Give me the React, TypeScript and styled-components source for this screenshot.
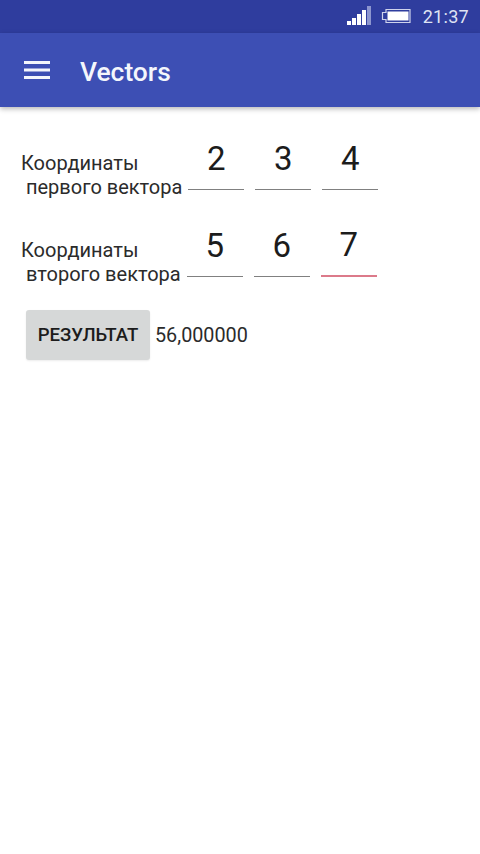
import React from "react";
import styled, { createGlobalStyle } from "styled-components";

const Global = createGlobalStyle`
  html, body { margin: 0; padding: 0; background: #fff; }
  body { font-family: Roboto, "Noto Sans", sans-serif; }
`;

const Screen = styled.div`
  width: 480px;
  height: 854px;
  display: flex;
  flex-direction: column;
  background: #fff;
  overflow: hidden;
`;

const StatusBar = styled.div`
  height: 33px;
  flex: none;
  display: flex;
  align-items: center;
  justify-content: flex-end;
  padding-right: 11px;
  background: #2f3d9e;
  color: #dfe3f3;
`;

const SignalIcon = styled.svg`
  width: 26px;
  height: 20px;
  margin-right: 9px;
  margin-top: -1px;
`;

const BatteryIcon = styled.svg`
  width: 31px;
  height: 16px;
  margin-right: 11px;
  margin-top: -2px;
`;

const Clock = styled.span`
  font-size: 18px;
  line-height: 33px;
  letter-spacing: 0.3px;
`;

const Toolbar = styled.header`
  height: 74px;
  flex: none;
  display: flex;
  align-items: center;
  background: #3d4fb4;
  box-shadow: 0 2px 5px rgba(0, 0, 0, 0.28);
  color: #f4f6fc;
  position: relative;
`;

const MenuIcon = styled.svg`
  width: 26px;
  height: 18px;
  margin: 0 30px 0 24px;
  margin-top: -1px;
`;

const Title = styled.h1`
  margin: 3px 0 0;
  font-size: 26.4px;
  font-weight: 500;
  line-height: 74px;
`;

const Content = styled.main`
  display: flex;
  flex-direction: column;
  padding: 35px 0 0 21px;
`;

const VectorRow = styled.section`
  display: flex;
  align-items: flex-end;
  height: 48px;
  margin-bottom: 39px;
`;

const Label = styled.div`
  font-size: 20px;
  line-height: 24px;
  color: #2b2b2b;
  white-space: pre;
  margin-bottom: -9px;
`;

const Fields = styled.div`
  display: flex;
  gap: 11px;
  margin-left: 6px;
`;

const Coord = styled.input<{ $error?: boolean }>`
  width: 56px;
  height: 50px;
  box-sizing: border-box;
  padding: 0 0 13px;
  border: 0;
  border-bottom: ${(p) => (p.$error ? "2px solid #dc7a8a" : "1px solid #808080")};
  background: transparent;
  outline: none;
  text-align: center;
  font-family: inherit;
  font-size: 33px;
  line-height: 36px;
  color: #1c1c1c;
`;

const ResultRow = styled.section`
  display: flex;
  align-items: center;
  margin: -6px 0 0 5px;
`;

const ResultButton = styled.button`
  width: 124px;
  height: 50px;
  padding: 0;
  border: 0;
  border-radius: 3px;
  background: #d6d8d8;
  box-shadow: 0 1px 2px rgba(0, 0, 0, 0.08);
  font-family: inherit;
  font-size: 18.6px;
  font-weight: 500;
  color: #1c1c1c;
`;

const ResultValue = styled.span`
  margin-left: 5px;
  font-size: 19.8px;
  color: #2b2b2b;
`;

const rows = [
  { label: "Координаты\n первого вектора", values: ["2", "3", "4"], errorAt: -1 },
  { label: "Координаты\n второго вектора", values: ["5", "6", "7"], errorAt: 2 },
];

export default function App() {
  return (
    <Screen>
      <Global />
      <StatusBar>
        <SignalIcon viewBox="0 0 26 20">
          <rect x="1" y="15" width="4" height="4" fill="#fff" />
          <rect x="6" y="12" width="4" height="7" fill="#fff" />
          <rect x="11" y="8" width="4" height="11" fill="#fff" />
          <rect x="16" y="4" width="4" height="15" fill="#fff" />
          <rect x="21" y="0" width="4" height="19" fill="#8d96cf" />
        </SignalIcon>
        <BatteryIcon viewBox="0 0 31 16">
          <path d="M5 1.5 H29 V14.5 H5 V11.5 H1.5 V4.5 H5 Z" fill="none" stroke="#cfd3ec" strokeWidth="1.2" />
          <rect x="6.5" y="3.5" width="21" height="9" fill="#fff" />
        </BatteryIcon>
        <Clock>21:37</Clock>
      </StatusBar>
      <Toolbar>
        <MenuIcon viewBox="0 0 26 18">
          <rect x="0" y="0" width="26" height="3" fill="#f4f6fc" />
          <rect x="0" y="7.5" width="26" height="3" fill="#f4f6fc" />
          <rect x="0" y="15" width="26" height="3" fill="#f4f6fc" />
        </MenuIcon>
        <Title>Vectors</Title>
      </Toolbar>
      <Content>
        {rows.map((row) => (
          <VectorRow key={row.label}>
            <Label>{row.label}</Label>
            <Fields>
              {row.values.map((value, i) => (
                <Coord key={value} value={value} readOnly $error={i === row.errorAt} />
              ))}
            </Fields>
          </VectorRow>
        ))}
        <ResultRow>
          <ResultButton>РЕЗУЛЬТАТ</ResultButton>
          <ResultValue>56,000000</ResultValue>
        </ResultRow>
      </Content>
    </Screen>
  );
}
